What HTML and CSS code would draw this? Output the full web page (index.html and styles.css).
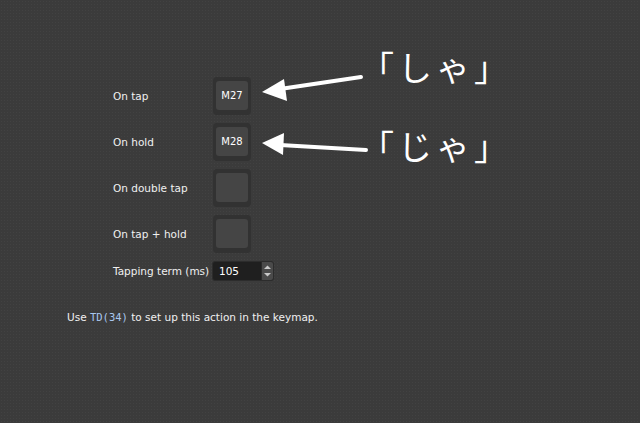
FILE: index.html
```html
<!DOCTYPE html>
<html lang="en">
<head>
  <meta charset="UTF-8" />
  <title>Tap dance</title>
  <link rel="stylesheet" href="styles.css">
</head>
<body>
  <div class="page">
    <div class="td-form">
      <div class="label">On tap</div>
      <div class="key"><div class="key-top">M27</div></div>

      <div class="label">On hold</div>
      <div class="key"><div class="key-top">M28</div></div>

      <div class="label">On double tap</div>
      <div class="key"><div class="key-top"></div></div>

      <div class="label">On tap + hold</div>
      <div class="key"><div class="key-top"></div></div>

      <div class="label">Tapping term (ms)</div>
      <div class="spin">
        <span class="spin-value">105</span>
        <span class="spin-btns">
          <svg width="9" height="16" viewBox="0 0 9 16">
            <path d="M1 6 L4.5 2.5 L8 6 Z" fill="#c8c8c8"/>
            <path d="M1 10 L4.5 13.5 L8 10 Z" fill="#c8c8c8"/>
          </svg>
        </span>
      </div>
    </div>

    <p class="hint">Use <code>TD(34)</code> to set up this action in the keymap.</p>
  </div>

  <!-- annotations drawn over the screenshot -->
  <svg class="arrows" width="640" height="423" viewBox="0 0 640 423">
    <line x1="361" y1="77" x2="280" y2="89" stroke="#fff" stroke-width="4" stroke-linecap="round"/>
    <path d="M262 92 L284 79 L287 101 Z" fill="#fff"/>
    <line x1="366" y1="150" x2="280" y2="145" stroke="#fff" stroke-width="4" stroke-linecap="round"/>
    <path d="M262 143 L284 133 L283 155 Z" fill="#fff"/>
  </svg>
  <div class="note note-1">「しゃ」</div>
  <div class="note note-2">「じゃ」</div>
</body>
</html>
```

FILE: styles.css
```css
html, body {
  margin: 0;
  height: 100%;
}

body {
  background-color: #3b3b3b;
  background-image: radial-gradient(circle, #424242 0.6px, transparent 0.8px);
  background-size: 3px 3px;
  font-family: "DejaVu Sans", Verdana, sans-serif;
  font-size: 10.5px;
  color: #f0f0f0;
  position: relative;
  overflow: hidden;
}

.page {
  padding: 77px 0 0 67px;
}

.td-form {
  display: grid;
  grid-template-columns: 100px auto;
  grid-template-rows: repeat(4, 38px) 20px;
  row-gap: 8px;
  align-items: center;
  margin-left: 46px;
}

.key {
  width: 38px;
  height: 38px;
  box-sizing: border-box;
  background: #323232;
  border-radius: 4px;
  padding: 4px 3px 5px 3px;
}

.key-top {
  height: 100%;
  background: #454545;
  border-radius: 3px;
  display: flex;
  align-items: center;
  justify-content: center;
  font-size: 10px;
  color: #fff;
}

.spin {
  justify-self: start;
  margin-left: -1px;
  width: 62px;
  height: 20px;
  box-sizing: border-box;
  display: flex;
  background: #1f1f1f;
  border: 1px solid #2c2c2c;
  border-radius: 3px;
  overflow: hidden;
}

.spin-value {
  flex: 1;
  padding-left: 6px;
  line-height: 18px;
  color: #fff;
}

.spin-btns {
  width: 11px;
  display: flex;
  align-items: center;
  justify-content: center;
  background: #4a4a4a;
  border-left: 1px solid #2a2a2a;
}

.hint {
  margin: 30px 0 0 0;
}

.hint code {
  font-family: "DejaVu Sans Mono", "Liberation Mono", monospace;
  font-size: 10.5px;
  color: #a9c8ef;
}

.arrows {
  position: absolute;
  left: 0;
  top: 0;
}

.note {
  position: absolute;
  font-family: "Noto Sans CJK JP", sans-serif;
  font-size: 34px;
  line-height: 1;
  letter-spacing: 4px;
  color: #fff;
}

.note-1 {
  left: 360px;
  top: 50px;
}

.note-2 {
  left: 360px;
  top: 129px;
}
```
